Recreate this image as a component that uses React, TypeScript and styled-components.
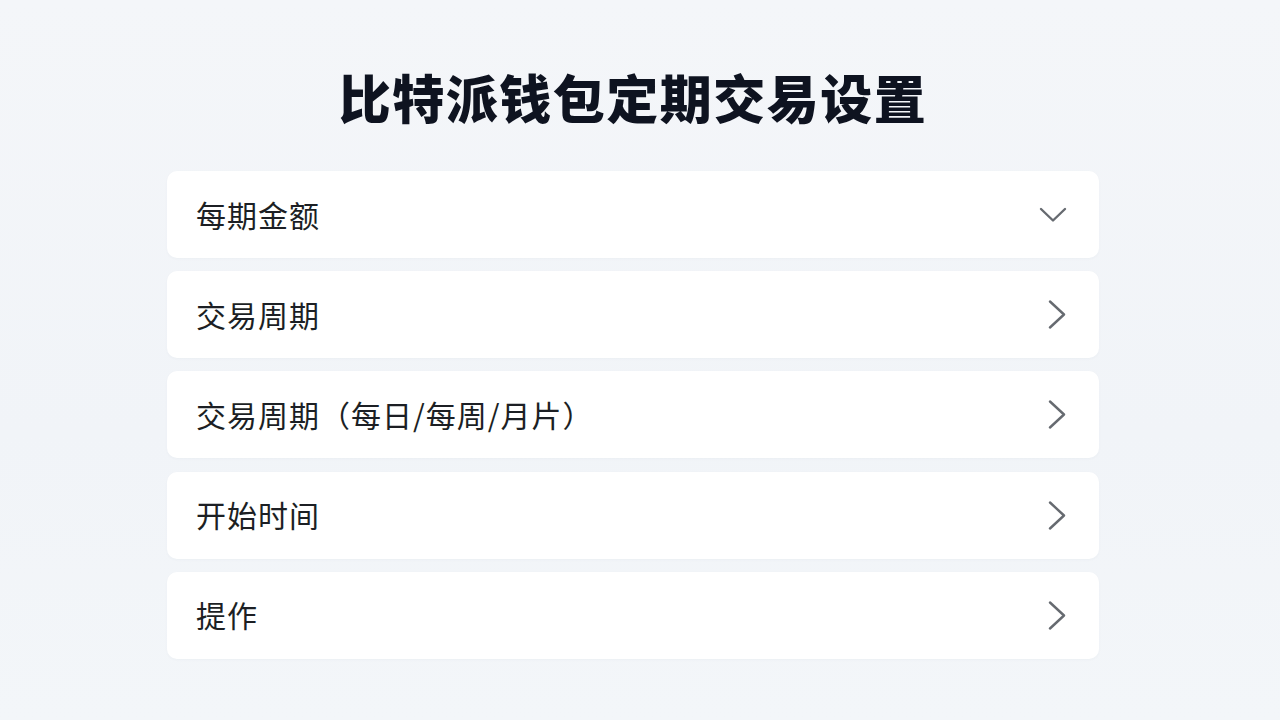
import styled, { createGlobalStyle } from "styled-components";
import { FC } from "react";

const GlobalStyle = createGlobalStyle`
  html, body {
    margin: 0;
    padding: 0;
  }
  body {
    background: linear-gradient(180deg, #f4f6f9 0%, #f1f4f8 60%, #f3f6f9 100%);
    font-family: "Noto Sans CJK SC", "Noto Sans", sans-serif;
  }
`;

const Page = styled.div`
  width: 1266px;
  height: 720px;
  display: flex;
  flex-direction: column;
  align-items: center;
  box-sizing: border-box;
  padding-top: 61px;
`;

const Title = styled.h1`
  margin: 0;
  font-size: 52px;
  line-height: 72px;
  font-weight: 900;
  color: #0e1320;
  letter-spacing: 1.5px;
`;

const List = styled.div`
  width: 932px;
  margin-top: 38px;
  display: flex;
  flex-direction: column;
  gap: 13.2px;
`;

const Row = styled.div`
  height: 87px;
  background: #ffffff;
  border-radius: 10px;
  box-shadow: 0 1px 3px rgba(30, 50, 80, 0.03);
  display: flex;
  align-items: center;
  justify-content: space-between;
  padding: 0 32px 0 29px;
`;

const Label = styled.span`
  font-size: 30px;
  color: #1c1f24;
  letter-spacing: 1px;
  margin-top: -2px;
`;

const IconBox = styled.div<{ $w: number }>`
  width: ${(p) => p.$w}px;
  display: flex;
  justify-content: center;
  color: #666a70;
`;

const Chevron: FC<{ open?: boolean }> = ({ open }) =>
  open ? (
    <IconBox $w={28}>
      <svg width="28" height="16" viewBox="0 0 28 16" fill="none">
        <path d="M2 2 L14 13.5 L26 2" stroke="currentColor" strokeWidth="2.4" strokeLinecap="round" strokeLinejoin="round" />
      </svg>
    </IconBox>
  ) : (
    <IconBox $w={20}>
      <svg width="18" height="29" viewBox="0 0 18 29" fill="none">
        <path d="M2 1.5 L16 14.5 L2 27.5" stroke="currentColor" strokeWidth="2.4" strokeLinecap="round" strokeLinejoin="round" />
      </svg>
    </IconBox>
  );

const items = [
  { label: "每期金额", open: true },
  { label: "交易周期" },
  { label: "交易周期（每日/每周/月片）" },
  { label: "开始时间" },
  { label: "提作" },
];

const App: FC = () => {
  return (
    <>
      <GlobalStyle />
      <Page>
        <Title>比特派钱包定期交易设置</Title>
        <List>
          {items.map((item, index) => (
            <Row key={index}>
              <Label>{item.label}</Label>
              <Chevron open={item.open} />
            </Row>
          ))}
        </List>
      </Page>
    </>
  );
};

export default App;
